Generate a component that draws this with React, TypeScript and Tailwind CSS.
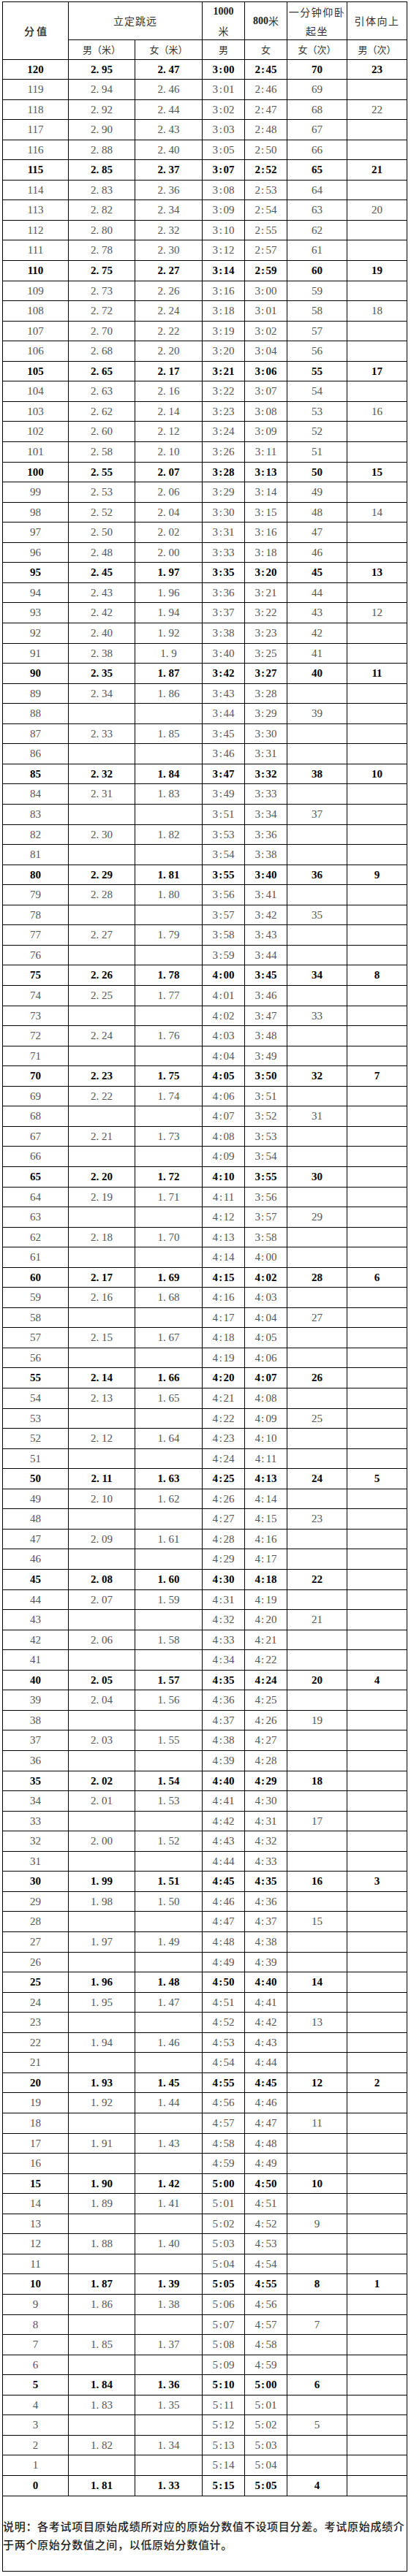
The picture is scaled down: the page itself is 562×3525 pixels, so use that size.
import React from "react";

const RAW = `120|2.95|2.47|3:00|2:45|70|23
119|2.94|2.46|3:01|2:46|69|
118|2.92|2.44|3:02|2:47|68|22
117|2.90|2.43|3:03|2:48|67|
116|2.88|2.40|3:05|2:50|66|
115|2.85|2.37|3:07|2:52|65|21
114|2.83|2.36|3:08|2:53|64|
113|2.82|2.34|3:09|2:54|63|20
112|2.80|2.32|3:10|2:55|62|
111|2.78|2.30|3:12|2:57|61|
110|2.75|2.27|3:14|2:59|60|19
109|2.73|2.26|3:16|3:00|59|
108|2.72|2.24|3:18|3:01|58|18
107|2.70|2.22|3:19|3:02|57|
106|2.68|2.20|3:20|3:04|56|
105|2.65|2.17|3:21|3:06|55|17
104|2.63|2.16|3:22|3:07|54|
103|2.62|2.14|3:23|3:08|53|16
102|2.60|2.12|3:24|3:09|52|
101|2.58|2.10|3:26|3:11|51|
100|2.55|2.07|3:28|3:13|50|15
99|2.53|2.06|3:29|3:14|49|
98|2.52|2.04|3:30|3:15|48|14
97|2.50|2.02|3:31|3:16|47|
96|2.48|2.00|3:33|3:18|46|
95|2.45|1.97|3:35|3:20|45|13
94|2.43|1.96|3:36|3:21|44|
93|2.42|1.94|3:37|3:22|43|12
92|2.40|1.92|3:38|3:23|42|
91|2.38|1.9|3:40|3:25|41|
90|2.35|1.87|3:42|3:27|40|11
89|2.34|1.86|3:43|3:28||
88|||3:44|3:29|39|
87|2.33|1.85|3:45|3:30||
86|||3:46|3:31||
85|2.32|1.84|3:47|3:32|38|10
84|2.31|1.83|3:49|3:33||
83|||3:51|3:34|37|
82|2.30|1.82|3:53|3:36||
81|||3:54|3:38||
80|2.29|1.81|3:55|3:40|36|9
79|2.28|1.80|3:56|3:41||
78|||3:57|3:42|35|
77|2.27|1.79|3:58|3:43||
76|||3:59|3:44||
75|2.26|1.78|4:00|3:45|34|8
74|2.25|1.77|4:01|3:46||
73|||4:02|3:47|33|
72|2.24|1.76|4:03|3:48||
71|||4:04|3:49||
70|2.23|1.75|4:05|3:50|32|7
69|2.22|1.74|4:06|3:51||
68|||4:07|3:52|31|
67|2.21|1.73|4:08|3:53||
66|||4:09|3:54||
65|2.20|1.72|4:10|3:55|30|
64|2.19|1.71|4:11|3:56||
63|||4:12|3:57|29|
62|2.18|1.70|4:13|3:58||
61|||4:14|4:00||
60|2.17|1.69|4:15|4:02|28|6
59|2.16|1.68|4:16|4:03||
58|||4:17|4:04|27|
57|2.15|1.67|4:18|4:05||
56|||4:19|4:06||
55|2.14|1.66|4:20|4:07|26|
54|2.13|1.65|4:21|4:08||
53|||4:22|4:09|25|
52|2.12|1.64|4:23|4:10||
51|||4:24|4:11||
50|2.11|1.63|4:25|4:13|24|5
49|2.10|1.62|4:26|4:14||
48|||4:27|4:15|23|
47|2.09|1.61|4:28|4:16||
46|||4:29|4:17||
45|2.08|1.60|4:30|4:18|22|
44|2.07|1.59|4:31|4:19||
43|||4:32|4:20|21|
42|2.06|1.58|4:33|4:21||
41|||4:34|4:22||
40|2.05|1.57|4:35|4:24|20|4
39|2.04|1.56|4:36|4:25||
38|||4:37|4:26|19|
37|2.03|1.55|4:38|4:27||
36|||4:39|4:28||
35|2.02|1.54|4:40|4:29|18|
34|2.01|1.53|4:41|4:30||
33|||4:42|4:31|17|
32|2.00|1.52|4:43|4:32||
31|||4:44|4:33||
30|1.99|1.51|4:45|4:35|16|3
29|1.98|1.50|4:46|4:36||
28|||4:47|4:37|15|
27|1.97|1.49|4:48|4:38||
26|||4:49|4:39||
25|1.96|1.48|4:50|4:40|14|
24|1.95|1.47|4:51|4:41||
23|||4:52|4:42|13|
22|1.94|1.46|4:53|4:43||
21|||4:54|4:44||
20|1.93|1.45|4:55|4:45|12|2
19|1.92|1.44|4:56|4:46||
18|||4:57|4:47|11|
17|1.91|1.43|4:58|4:48||
16|||4:59|4:49||
15|1.90|1.42|5:00|4:50|10|
14|1.89|1.41|5:01|4:51||
13|||5:02|4:52|9|
12|1.88|1.40|5:03|4:53||
11|||5:04|4:54||
10|1.87|1.39|5:05|4:55|8|1
9|1.86|1.38|5:06|4:56||
8|||5:07|4:57|7|
7|1.85|1.37|5:08|4:58||
6|||5:09|4:59||
5|1.84|1.36|5:10|5:00|6|
4|1.83|1.35|5:11|5:01||
3|||5:12|5:02|5|
2|1.82|1.34|5:13|5:03||
1|||5:14|5:04||
0|1.81|1.33|5:15|5:05|4|`;

const ROWS = RAW.split("\n").map((l) => l.split("|"));

const CJK = "font-['Noto_Sans_CJK_SC','Noto_Sans',sans-serif]";
const NUM = "font-['Liberation_Serif','Noto_Sans_CJK_SC',serif]";

const WIDTHS = ["w-[90px]", "w-[91px]", "w-[92px]", "w-[58px]", "w-[58px]", "w-[82px]", "w-[82px]"];

function Num({ v, mode }: { v: string; mode: "dot" | "colonC" | "colonL" | "plain" }) {
  if (!v) return null;
  if (mode === "dot" && v.includes(".")) {
    const [a, b] = v.split(".");
    return (
      <span>
        {a}
        <span className="inline-block w-[0.5em] text-left">.</span>
        {b}
      </span>
    );
  }
  if ((mode === "colonC" || mode === "colonL") && v.includes(":")) {
    const [a, b] = v.split(":");
    return (
      <span>
        {a}
        <span className={mode === "colonC" ? "inline-block w-[0.5em] text-center" : "inline-block w-[0.5em] text-left pl-[1px]"}>:</span>
        {b}
      </span>
    );
  }
  return <span>{v}</span>;
}

export default function App() {
  const total = 3334;
  const n = ROWS.length;
  return (
    <div className="min-h-[3525px] w-[562px] bg-white">
      <div className="ml-[3px] pt-[2px]">
        {/* header */}
        <div className="w-[554px] border-l border-t border-black grid grid-cols-[90px_91px_92px_58px_58px_82px_82px] grid-rows-[52px_27px]">
          <div className={`row-span-2 border-r border-b border-black flex items-center justify-center text-[14px] tracking-[3px] pl-[3px] text-[#222] font-medium ${CJK}`}>
            分值
          </div>
          <div className={`col-span-2 border-r border-b border-black flex items-center justify-center text-[14px] tracking-[1px] text-[#333] ${CJK}`}>
            立定跳远
          </div>
          <div className="border-r border-b border-black flex flex-col items-center justify-center text-[14px] leading-[26px] text-[#222]">
            <span className={`font-bold ${NUM}`}>1000</span>
            <span className={`${CJK} text-[#333]`}>米</span>
          </div>
          <div className="border-r border-b border-black flex items-center justify-center text-[14px] text-[#222] whitespace-nowrap">
            <span className={`font-bold ${NUM}`}>800</span>
            <span className={`${CJK} text-[#333]`}>米</span>
          </div>
          <div className={`border-r border-b border-black flex flex-col items-center justify-center text-[14px] leading-[26px] tracking-[1.5px] text-[#333] whitespace-nowrap ${CJK}`}>
            <span>一分钟仰卧</span>
            <span>起坐</span>
          </div>
          <div className={`border-r border-b border-black flex items-center justify-center text-[14px] tracking-[1.5px] text-[#333] whitespace-nowrap ${CJK}`}>
            引体向上
          </div>
          {["男（米）", "女（米）", "男", "女", "女（次）", "男（次）"].map((t, i) => (
            <div
              key={i}
              className={`border-r border-b border-black flex items-center justify-center text-[13px] text-[#333] whitespace-nowrap ${CJK}`}
            >
              {t}
            </div>
          ))}
        </div>
        {/* body */}
        <div className="w-[554px] border-l border-black">
          {ROWS.map((r, i) => {
            const h = Math.floor(((i + 1) * total) / n) - Math.floor((i * total) / n);
            const score = parseInt(r[0], 10);
            const bold = score % 5 === 0;
            const txt = bold ? "font-bold text-black" : "text-[#555]";
            const modes: ("plain" | "dot" | "colonC" | "colonL")[] = ["plain", "dot", "dot", "colonC", "colonL", "plain", "plain"];
            return (
              <div key={i} className={`flex text-[15px] ${NUM} ${txt}`} style={{ height: h }}>
                {r.map((v, j) => (
                  <div
                    key={j}
                    className={`${WIDTHS[j]} shrink-0 border-r border-b border-black flex items-center justify-center whitespace-nowrap leading-none`}
                  >
                    <Num v={v} mode={modes[j]} />
                  </div>
                ))}
              </div>
            );
          })}
        </div>
        {/* footnote */}
        <div className="w-[554px] h-[103px] border-l border-r border-b border-black pt-[28px]">
          <div className={`text-[15px] leading-[25px] tracking-[0.7px] text-[#222] font-medium whitespace-nowrap ${CJK}`}>
            说明：各考试项目原始成绩所对应的原始分数值不设项目分差。考试原始成绩介
            <br />
            于两个原始分数值之间，以低原始分数值计。
          </div>
        </div>
      </div>
    </div>
  );
}
